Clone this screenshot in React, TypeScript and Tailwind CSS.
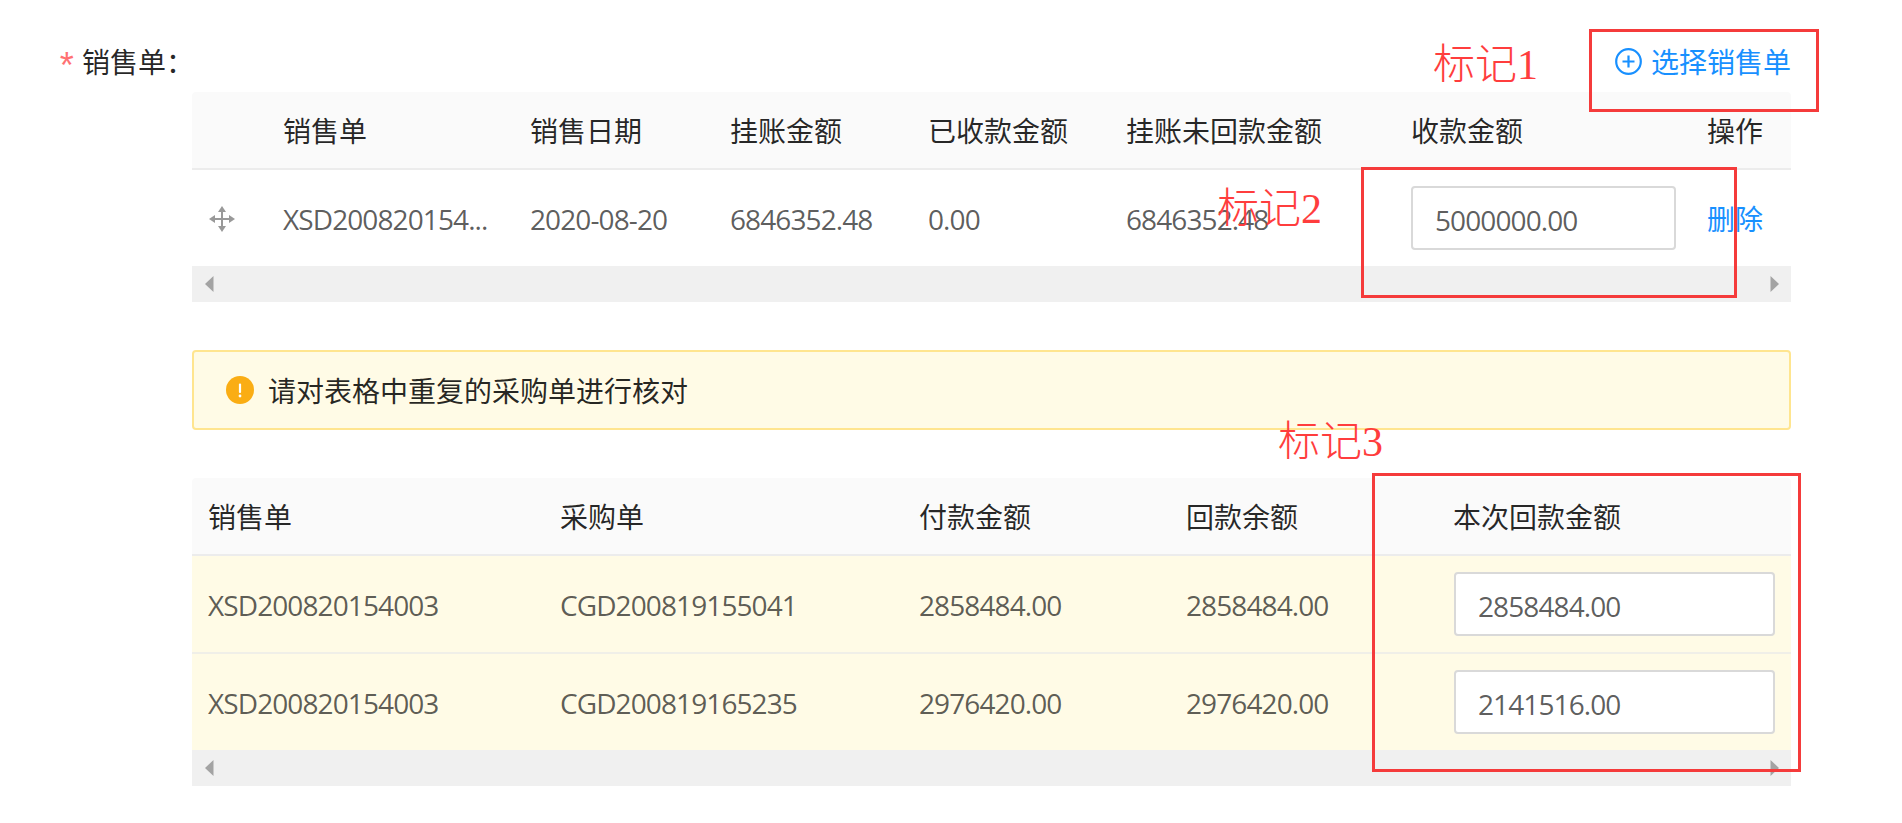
const cjk = "font-['Open_Sans','Noto_Sans_CJK_SC',sans-serif]";
const cell = "px-[16px] pt-[2px]";

function MoveIcon() {
  return (
    <svg width="26" height="26" viewBox="0 0 26 26" fill="#999">
      <path d="M12 4h2v18h-2z" />
      <path d="M4 12h18v2H4z" />
      <path d="M13 0l4 6H9z" />
      <path d="M13 26l4-6H9z" />
      <path d="M0 13l6-4v8z" />
      <path d="M26 13l-6-4v8z" />
    </svg>
  );
}

function ScrollBar() {
  return (
    <div className="h-[36px] bg-[#f0f0f0] flex items-center justify-between pl-[13px] pr-[12px]">
      <svg width="9" height="16" viewBox="0 0 9 16" fill="#a3a3a3">
        <path d="M8.5 0v16L0 8z" />
      </svg>
      <svg width="9" height="16" viewBox="0 0 9 16" fill="#a3a3a3">
        <path d="M.5 0v16L9 8z" />
      </svg>
    </div>
  );
}

function Amount({ value, className }: { value: string; className: string }) {
  return (
    <input
      readOnly
      value={value}
      className={`h-[64px] border-2 border-[#d9d9d9] rounded-[4px] bg-white pl-[22px] pt-[3px] text-[28px] tracking-[-0.9px] text-black/65 outline-none ${className}`}
    />
  );
}

function Note({ text, className }: { text: string; className: string }) {
  return (
    <span className={`absolute text-[42px] leading-[42px] text-[#ff3d3d] font-['Liberation_Serif','Noto_Sans_CJK_SC',serif] font-light ${className}`}>
      {text}
    </span>
  );
}

const salesCols = "grid grid-cols-[75px_247px_200px_198px_198px_285px_296px_100px]";
const purchaseCols = "grid grid-cols-[352px_359px_267px_267px_354px]";

const purchases = [
  { sale: "XSD200820154003", order: "CGD200819155041", paid: "2858484.00", left: "2858484.00", now: "2858484.00" },
  { sale: "XSD200820154003", order: "CGD200819165235", paid: "2976420.00", left: "2976420.00", now: "2141516.00" },
];

export default function App() {
  return (
    <div className={`relative h-[823px] bg-white overflow-hidden pt-[47px] text-[28px] leading-[28px] ${cjk}`}>
      <div className="flex items-center h-[28px] pl-[58px] pr-[111px]">
        <span className="w-[24px] -ml-[2px] mr-[2px] text-[36px] text-[#ff4d4f]/80 font-['Liberation_Mono',monospace] translate-y-[9px]">*</span>
        <span className="pt-[2px] text-black/85">销售单：</span>
        <a className="ml-auto flex items-center gap-[9px] text-[#1890ff]">
          <svg width="27" height="27" viewBox="0 0 27 27" fill="none" stroke="#1890ff" strokeWidth="2.2">
            <circle cx="13.5" cy="13.5" r="12.3" />
            <path d="M13.5 7.5v12M7.5 13.5h12" />
          </svg>
          <span className="pt-[2px]">选择销售单</span>
        </a>
      </div>

      <div className="ml-[192px] mr-[111px]">
        <div className="mt-[17px] rounded-t-[4px] overflow-hidden">
          <div className={`${salesCols} h-[78px] items-center bg-[#fafafa] border-b-2 border-[#ececec] text-black/85`}>
            <div />
            <div className={cell}>销售单</div>
            <div className={cell}>销售日期</div>
            <div className={cell}>挂账金额</div>
            <div className={cell}>已收款金额</div>
            <div className={cell}>挂账未回款金额</div>
            <div className={cell}>收款金额</div>
            <div className={cell}>操作</div>
          </div>
          <div className={`${salesCols} h-[96px] items-center text-black/65 tracking-[-0.9px]`}>
            <div className="pl-[17px] pt-[2px]">
              <MoveIcon />
            </div>
            <div className={cell}>XSD200820154...</div>
            <div className={cell}>2020-08-20</div>
            <div className={cell}>6846352.48</div>
            <div className={cell}>0.00</div>
            <div className={cell}>6846352.48</div>
            <div className="px-[16px]">
              <Amount value="5000000.00" className="w-[265px]" />
            </div>
            <div className={`${cell} text-[#1890ff] tracking-normal`}>删除</div>
          </div>
          <ScrollBar />
        </div>

        <div className="mt-[48px] h-[80px] flex items-center gap-[14px] pl-[32px] border-2 border-[#ffe58f] bg-[#fffbe6] rounded-[4px] text-black/85">
          <svg width="28" height="28" viewBox="0 0 28 28">
            <circle cx="14" cy="14" r="14" fill="#faad14" />
            <rect x="12.9" y="7.5" width="2.2" height="9.5" rx="1" fill="#fff" />
            <circle cx="14" cy="20" r="1.4" fill="#fff" />
          </svg>
          <span className="pt-[2px]">请对表格中重复的采购单进行核对</span>
        </div>

        <div className="mt-[48px] rounded-t-[4px] overflow-hidden">
          <div className={`${purchaseCols} h-[78px] items-center bg-[#fafafa] border-b-2 border-[#ececec] text-black/85`}>
            <div className={cell}>销售单</div>
            <div className={cell}>采购单</div>
            <div className={cell}>付款金额</div>
            <div className={cell}>回款余额</div>
            <div className={cell}>本次回款金额</div>
          </div>
          {purchases.map((p, i) => (
            <div
              key={p.order}
              className={`${purchaseCols} items-center bg-[#fffbe6] text-black/65 tracking-[-0.9px] ${i === 0 ? "h-[98px] border-b-2 border-[#f0efe8]" : "h-[96px]"}`}
            >
              <div className={cell}>{p.sale}</div>
              <div className={cell}>{p.order}</div>
              <div className={cell}>{p.paid}</div>
              <div className={cell}>{p.left}</div>
              <div className="pl-[17px]">
                <Amount value={p.now} className="w-[321px]" />
              </div>
            </div>
          ))}
          <ScrollBar />
        </div>
      </div>

      <div className="absolute left-[1589px] top-[29px] w-[230px] h-[83px] border-[3px] border-[#f53b3b]" />
      <div className="absolute left-[1361px] top-[167px] w-[376px] h-[131px] border-[3px] border-[#f53b3b]" />
      <div className="absolute left-[1372px] top-[473px] w-[429px] h-[299px] border-[3px] border-[#f53b3b]" />
      <Note text="标记1" className="left-[1433px] top-[44px]" />
      <Note text="标记2" className="left-[1217px] top-[188px]" />
      <Note text="标记3" className="left-[1278px] top-[421px]" />
    </div>
  );
}
